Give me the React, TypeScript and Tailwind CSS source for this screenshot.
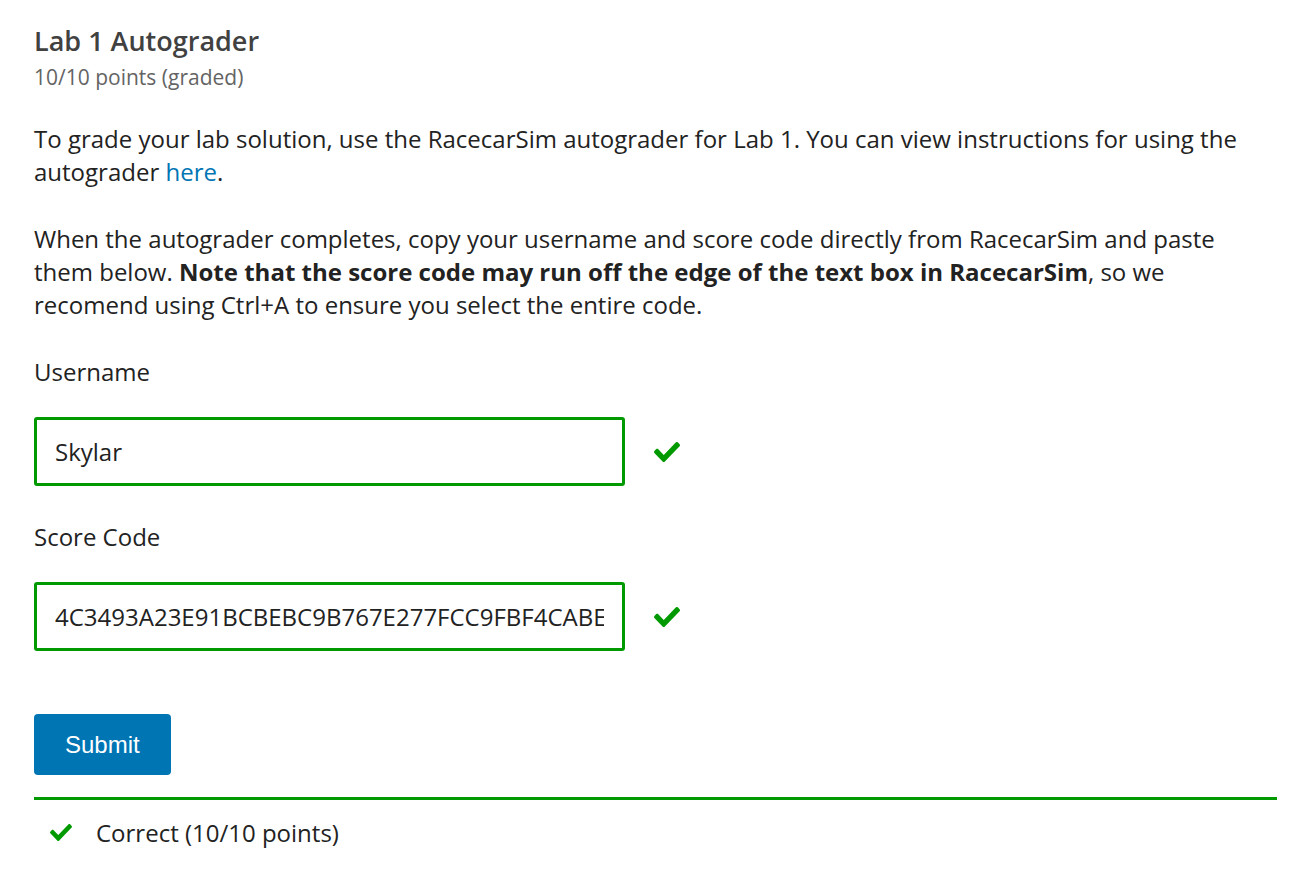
import React from "react";

function Check({ className = "" }: { className?: string }) {
  return (
    <svg viewBox="0 66 512 380" preserveAspectRatio="none" className={className} fill="currentColor" aria-hidden="true">
      <path d="M173.9 439.4l-166.4-166.4c-10-10-10-26.2 0-36.2l36.2-36.2c10-10 26.2-10 36.2 0L192 312.7 432.1 72.6c10-10 26.2-10 36.2 0l36.2 36.2c10 10 10 26.2 0 36.2l-294.4 294.4c-10 10-26.2 10-36.2 0z" />
    </svg>
  );
}

function Field({ label, value }: { label: string; value: string }) {
  return (
    <div>
      <label className="block leading-[33px]">{label}</label>
      <div className="mt-[29px] flex items-center">
        <input
          readOnly
          value={value}
          className="h-[69px] w-[591px] rounded-[3px] border-[3px] border-[#009a00] bg-white pl-[18px] pr-[18px] text-[24px] text-[#222] outline-none"
          style={{ fontFamily: "'Open Sans', sans-serif" }}
        />
        <Check className="ml-[29px] h-[20px] w-[26px] text-[#009a00]" />
      </div>
    </div>
  );
}

export default function App() {
  return (
    <div
      className="min-h-[877px] bg-white pl-[34px] pr-[30px] pt-[26px] text-[24px] leading-[33px] text-[#222]"
      style={{ fontFamily: "'Open Sans', sans-serif" }}
    >
      <h2 className="text-[27px] font-semibold leading-[30px] text-[#414141]">Lab 1 Autograder</h2>
      <div className="mt-[7px] text-[21px] leading-[28px] text-[#646464]">10/10 points (graded)</div>

      <p className="mt-[31px] pr-[20px]">
        To grade your lab solution, use the RacecarSim autograder for Lab 1. You can view instructions for using the
        autograder <a className="text-[#0075b4]" href="#">here</a>.
      </p>

      <p className="mt-[34px] pr-[20px]">
        When the autograder completes, copy your username and score code directly from RacecarSim and paste them
        below. <strong className="font-bold">Note that the score code may run off the edge of the text box in RacecarSim</strong>,
        so we recomend using Ctrl+A to ensure you select the entire code.
      </p>

      <div className="mt-[34px]">
        <Field label="Username" value="Skylar" />
      </div>
      <div className="mt-[34px]">
        <Field label="Score Code" value="4C3493A23E91BCBEBC9B767E277FCC9FBF4CABE3" />
      </div>

      <button
        className="mt-[63px] h-[61px] rounded-[4px] bg-[#0075b4] px-[31px] text-[24px] text-white"
        style={{ fontFamily: "'Liberation Sans', Arial, sans-serif" }}
      >
        Submit
      </button>

      <div className="mt-[22px] border-t-[3px] border-[#009a00]">
        <div className="flex items-center pt-[16px]">
          <Check className="ml-[16px] h-[17px] w-[22px] text-[#009a00]" />
          <span className="ml-[24px]">Correct (10/10 points)</span>
        </div>
      </div>
    </div>
  );
}
